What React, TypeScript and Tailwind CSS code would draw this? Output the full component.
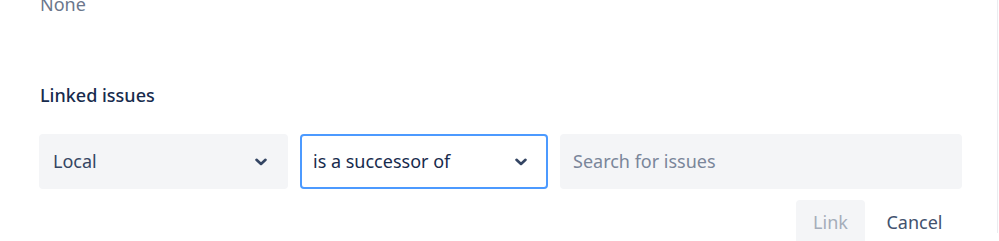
import React from 'react';

const Chevron = () => (
  <svg width="12" height="8" viewBox="0 0 12 8" className="text-[#344563]">
    <path d="M1.5 1.8 L6 6 L10.5 1.8" fill="none" stroke="currentColor" strokeWidth="2.6" strokeLinecap="round" strokeLinejoin="round" />
  </svg>
);

export default function App() {
  return (
    <div className="w-[999px] h-[241px] overflow-hidden bg-white font-['Noto_Sans',sans-serif]">
      <div className="w-[998px] h-full border-r border-[#ebecf0] pl-[39px] pr-[35px]">
        {/* previous field value */}
        <div className="-mt-[8px] pl-[1px] text-[18px] leading-[24px] text-[#6b778c]">None</div>

        <div className="mt-[67px] pl-[1px] text-[18px] leading-[24px] font-medium text-[#172b4d]">Linked issues</div>

        <div className="mt-[27px] flex gap-[12px]">
          <button className="w-[249px] h-[55px] rounded-[4px] bg-[#f4f5f7] flex items-center justify-between pl-[14px] pr-[21px] text-[18px] text-[#344563]">
            <span>Local</span>
            <Chevron />
          </button>
          <button className="w-[248px] h-[55px] rounded-[4px] bg-white border-2 border-[#4c9aff] flex items-center justify-between pl-[11px] pr-[19px] text-[18px] text-[#172b4d]">
            <span>is a successor of</span>
            <Chevron />
          </button>
          <div className="flex-1 h-[55px] rounded-[4px] bg-[#f4f5f7] flex items-center pl-[13px] text-[18px] text-[#7a869a]">
            Search for issues
          </div>
        </div>

        <div className="mt-[11px] flex justify-end items-start gap-[2px]">
          <button className="h-[44px] w-[69px] rounded-[4px] bg-[#f4f5f7] text-[18px] text-[#a5adba]">Link</button>
          <button className="h-[44px] w-[95px] rounded-[4px] text-[18px] text-[#42526e]">Cancel</button>
        </div>
      </div>
    </div>
  );
}
